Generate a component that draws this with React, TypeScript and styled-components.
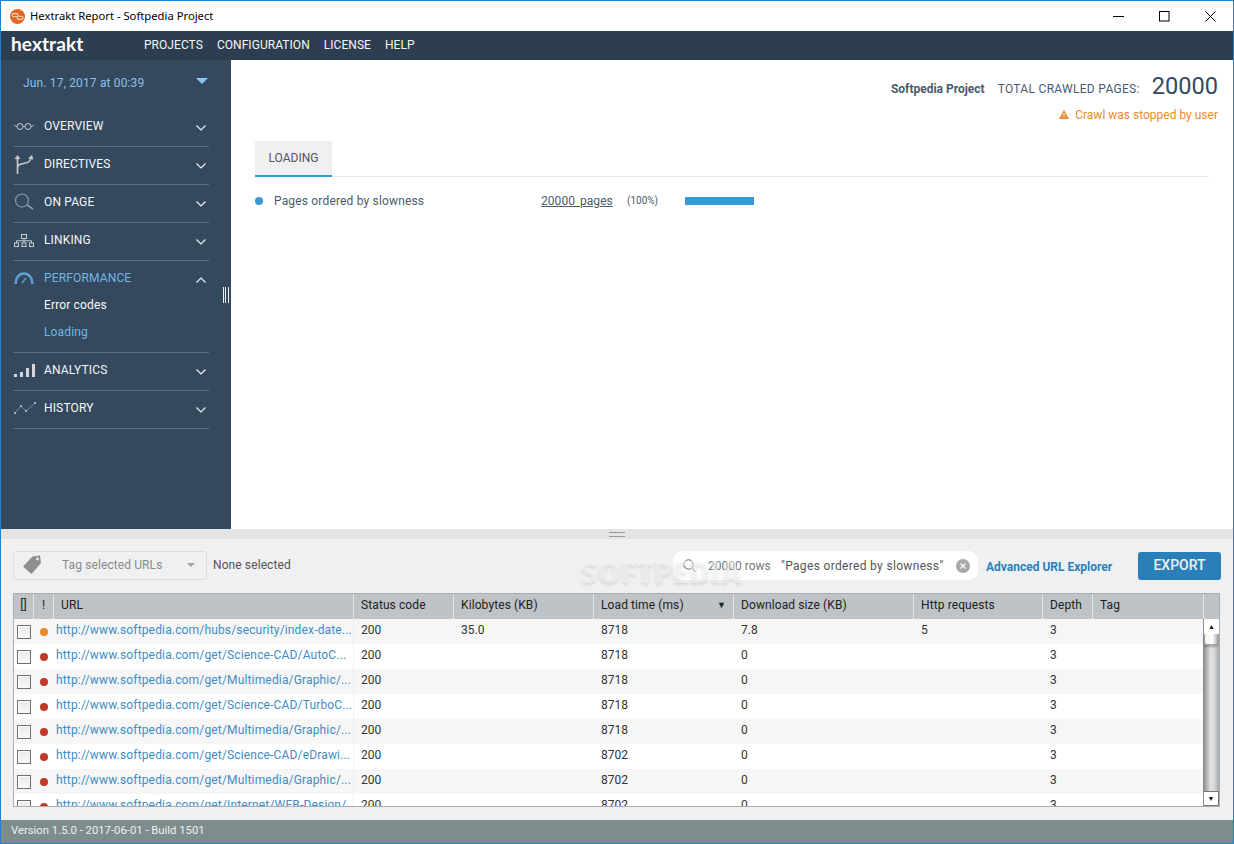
import React from "react";
import styled, { createGlobalStyle } from "styled-components";

const GlobalStyle = createGlobalStyle`
  html, body {
    margin: 0;
    padding: 0;
    background: #fff;
    overflow: hidden;
  }
  * { box-sizing: border-box; }
`;

const Window = styled.div`
  width: 1234px;
  height: 844px;
  display: flex;
  flex-direction: column;
  border: 1px solid #1b82d6;
  font-family: Roboto, "Liberation Sans", sans-serif;
  font-size: 12px;
  color: #34495e;
  overflow: hidden;
`;

const TitleBar = styled.div`
  height: 30px;
  flex: none;
  display: flex;
  align-items: center;
  padding-left: 9px;
  background: #fff;
`;

const TitleText = styled.span`
  margin-left: 5px;
  margin-bottom: 1px;
  font-family: "Noto Sans", "Open Sans", sans-serif;
  font-size: 11.25px;
  color: #000;
`;

const WindowButtons = styled.div`
  margin-left: auto;
  display: flex;
`;

const WindowButton = styled.div`
  width: 46px;
  height: 30px;
  display: flex;
  align-items: center;
  justify-content: center;
`;

const NavBar = styled.nav`
  height: 29px;
  flex: none;
  display: flex;
  align-items: center;
  background: #2c3e50;
  padding: 0 0 2px 10px;
`;

const Logo = styled.div`
  width: 133px;
  font-family: Lato, sans-serif;
  font-weight: 700;
  font-size: 19px;
  letter-spacing: 0.1px;
  color: #fff;
  margin-top: -2px;
`;

const NavLinks = styled.div`
  display: flex;
  gap: 14px;
`;

const NavLink = styled.a`
  font-size: 12px;
  color: #f4f6f7;
  letter-spacing: 0.05px;
`;

const TopArea = styled.div`
  height: 469px;
  flex: none;
  display: flex;
`;

const Sidebar = styled.aside`
  position: relative;
  width: 230px;
  flex: none;
  background: #34495e;
  padding: 0 22px 0 12px;
`;

const DateRow = styled.div`
  height: 49px;
  display: flex;
  align-items: flex-start;
  justify-content: space-between;
  padding: 16px 1px 0 10px;
  font-size: 12px;
  letter-spacing: 0.15px;
  color: #85c1ea;
`;

const DateCaret = styled.div`
  width: 0;
  height: 0;
  margin-top: 2px;
  border-left: 6px solid transparent;
  border-right: 6px solid transparent;
  border-top: 6px solid #85c8f2;
`;

const MenuSection = styled.div`
  border-bottom: 1px solid #5d6d7e;
`;

const MenuHead = styled.div`
  height: 37px;
  display: flex;
  align-items: center;
  padding-bottom: 3px;
`;

const MenuIcon = styled.div`
  width: 31px;
  flex: none;
  padding-left: 1px;
  display: flex;
  align-items: center;
`;

const MenuLabel = styled.span<{ $active?: boolean }>`
  flex: 1;
  font-size: 12px;
  letter-spacing: 0.15px;
  color: ${({ $active }) => ($active ? "#73b5e0" : "#f4f6f7")};
`;

const Chevron = styled.svg`
  flex: none;
  margin-right: 3px;
  margin-top: 3px;
`;

const SubItems = styled.div`
  display: flex;
  flex-direction: column;
  padding: 0 0 7px 31px;
`;

const SubItem = styled.div<{ $active?: boolean }>`
  height: 27px;
  display: flex;
  align-items: center;
  font-size: 12px;
  letter-spacing: 0.15px;
  color: ${({ $active }) => ($active ? "#73b5e0" : "#f4f6f7")};
  &:first-child { margin-top: -7px; }
`;

const Grip = styled.div`
  position: absolute;
  left: 222px;
  top: 227px;
  width: 6px;
  height: 16px;
  border-left: 1px solid #ecf0f1;
  border-right: 1px solid #ecf0f1;
  &::after {
    content: "";
    display: block;
    width: 1px;
    height: 16px;
    margin-left: 1px;
    background: #ecf0f1;
  }
`;

const Main = styled.main`
  flex: 1;
  background: #fff;
  padding: 0 24px;
`;

const Summary = styled.div`
  height: 42px;
  margin-right: -9px;
  display: flex;
  align-items: center;
  justify-content: flex-end;
  padding-top: 10px;
`;

const ProjectName = styled.span`
  font-weight: 700;
  color: #4a5b6d;
  margin-right: 13px;
  position: relative;
  top: 3px;
`;

const TotalLabel = styled.span`
  color: #4a5b6d;
  font-size: 12px;
  letter-spacing: 0.3px;
  margin-right: 12px;
  position: relative;
  top: 3px;
`;

const TotalValue = styled.span`
  font-size: 23.6px;
  color: #34495e;
  line-height: 28px;
`;

const Warning = styled.div`
  height: 24px;
  margin-right: -9px;
  padding-top: 1px;
  display: flex;
  align-items: center;
  justify-content: flex-end;
  gap: 6px;
  color: #ee8a2c;
  font-size: 12px;
`;

const TabStrip = styled.div`
  margin-top: 15px;
  display: flex;
  border-bottom: 1px solid #e8e8e8;
`;

const Tab = styled.div`
  width: 77px;
  height: 36px;
  margin-bottom: -1px;
  background: #eff0f2;
  border-bottom: 2px solid #3498db;
  display: flex;
  align-items: center;
  justify-content: center;
  font-size: 12px;
  color: #555;
`;

const ResultRow = styled.div`
  height: 48px;
  display: flex;
  align-items: center;
`;

const BlueDot = styled.span`
  width: 8px;
  height: 8px;
  border-radius: 50%;
  background: #3498db;
  margin-right: 11px;
`;

const ResultName = styled.span`
  width: 267px;
  color: #4a5b6d;
  letter-spacing: 0.17px;
`;

const PagesLink = styled.a`
  width: 86px;
  color: #4a5b6d;
  text-decoration: underline;
  word-spacing: 2px;
  letter-spacing: 0.05px;
`;

const Percent = styled.span`
  width: 58px;
  font-size: 10px;
  color: #4a5b6d;
  margin-bottom: 2px;
`;

const Bar = styled.div`
  width: 69px;
  height: 8px;
  background: #3498db;
`;

const Splitter = styled.div`
  height: 10px;
  flex: none;
  background: #e4e4e4;
  display: flex;
  align-items: center;
  justify-content: center;
`;

const SplitterGrip = styled.div`
  width: 16px;
  height: 5px;
  border-top: 1px solid #999;
  border-bottom: 1px solid #999;
`;

const BottomPanel = styled.section`
  flex: 1;
  position: relative;
  background: #eff0f2;
  padding: 12px 12px 0;
`;

const Toolbar = styled.div`
  height: 29px;
  display: flex;
  align-items: center;
`;

const TagSelect = styled.div`
  width: 194px;
  height: 29px;
  display: flex;
  align-items: center;
  border: 1px solid #dcdde0;
  border-radius: 3px;
  padding: 0 11px 2px 8px;
  color: #8a8a8a;
`;

const TagText = styled.span`
  flex: 1;
  margin-left: 20px;
  letter-spacing: 0.1px;
`;

const TagCaret = styled.span`
  width: 0;
  height: 0;
  border-left: 4px solid transparent;
  border-right: 4px solid transparent;
  border-top: 4px solid #a2a2a2;
`;

const NoneSelected = styled.span`
  margin-left: 6px;
  margin-bottom: 2px;
  color: #555;
  letter-spacing: 0.1px;
`;

const SearchPill = styled.div`
  margin-left: auto;
  width: 305px;
  height: 29px;
  background: #fff;
  border-radius: 9px;
  display: flex;
  align-items: center;
  padding: 0 8px 0 10px;
  color: #666;
`;

const RowCount = styled.span`
  margin-left: 12px;
  width: 73px;
  color: #777;
`;

const SearchTerm = styled.span`
  flex: 1;
  color: #555;
  letter-spacing: 0.33px;
`;

const AdvancedLink = styled.a`
  margin-left: 8px;
  margin-top: 2px;
  width: 152px;
  font-weight: 700;
  color: #2980b9;
`;

const ExportButton = styled.button`
  width: 83px;
  height: 28px;
  border: none;
  border-radius: 3px;
  background: #2980b9;
  color: #ecf0f1;
  font-family: inherit;
  font-size: 14px;
  font-weight: 500;
  padding: 0 0 2px;
`;

const Watermark = styled.div`
  position: absolute;
  left: 579px;
  top: 15px;
  font-family: "Open Sans", sans-serif;
  font-weight: 800;
  font-size: 30px;
  letter-spacing: -0.4px;
  line-height: 36px;
  color: rgba(255, 255, 255, 0.45);
  text-shadow: 0 2px 3px rgba(0, 0, 0, 0.1);
  pointer-events: none;
`;

const Table = styled.div`
  width: 1207px;
  margin-top: 13px;
  border: 1px solid #a8aeb2;
  background: #fff;
`;

const HeaderRow = styled.div`
  display: grid;
  grid-template-columns: 20px 20px 300px 100px 140px 140px 180px 129px 50px 111px 1fr;
  height: 25px;
  background: #bdc3c7;
`;

const HeaderCell = styled.div<{ $center?: boolean }>`
  display: flex;
  align-items: center;
  justify-content: ${({ $center }) => ($center ? "center" : "flex-start")};
  padding: 0 ${({ $center }) => ($center ? "0" : "7px")} 3px;
  border-right: 1px solid #e3e6e8;
  font-size: 12px;
  letter-spacing: 0.1px;
  color: #222;
  &:last-child { border-right: none; }
`;

const SortMark = styled.span`
  margin-left: auto;
  font-size: 9px;
`;

const BodyWrap = styled.div`
  display: flex;
  height: 187px;
  overflow: hidden;
`;

const Rows = styled.div`
  flex: 1;
  min-width: 0;
`;

const Row = styled.div<{ $odd: boolean }>`
  display: grid;
  grid-template-columns: 20px 20px 300px 100px 140px 140px 180px 129px 50px 111px;
  height: 25px;
  background: ${({ $odd }) => ($odd ? "#f6f6f6" : "#fff")};
`;

const Cell = styled.div`
  display: flex;
  align-items: center;
  padding-left: 7px;
  padding-bottom: 4px;
  font-size: 12px;
  color: #333;
  white-space: nowrap;
  overflow: hidden;
`;

const CheckCell = styled.div`
  display: flex;
  align-items: center;
  padding-left: 3px;
`;

const CheckBox = styled.div`
  width: 14px;
  height: 14px;
  border: 1px solid #6f6f6f;
  background: linear-gradient(#e9e9e9, #fafafa);
  box-shadow: inset 1px 1px 0 #fff;
`;

const StatusCell = styled.div`
  display: flex;
  align-items: center;
  padding-left: 6px;
`;

const StatusDot = styled.span<{ $color: string }>`
  width: 8px;
  height: 8px;
  border-radius: 50%;
  background: ${({ $color }) => $color};
`;

const UrlCell = styled(Cell)`
  padding-left: 2px;
  color: #3f8cc4;
  letter-spacing: 0.16px;
  border-right: 1px solid #eef0f1;
`;

const Scrollbar = styled.div`
  width: 16px;
  flex: none;
  display: flex;
  flex-direction: column;
  border-left: 1px solid #8c8c8c;
  background: linear-gradient(90deg, #8f9193, #e2e3e4 45%, #d5d6d7 70%, #a6a8a9);
`;

const ScrollButton = styled.div`
  height: 15px;
  flex: none;
  background: #fff;
  display: flex;
  align-items: center;
  justify-content: center;
  font-size: 7px;
  color: #111;
`;

const ScrollThumb = styled.div`
  height: 11px;
  margin-right: 1px;
  background: linear-gradient(90deg, #f2f2f2, #fff 60%, #bcbcbc);
  border: 1px solid #a4a4a4;
  border-top: none;
  border-radius: 0 0 3px 3px;
  box-shadow: 0 2px 2px rgba(0, 0, 0, 0.25);
`;

const ScrollTrack = styled.div`
  flex: 1;
`;

const ScrollDown = styled(ScrollButton)`
  border: 1px solid #777;
  border-left: none;
`;

const Footer = styled.footer`
  height: 23px;
  flex: none;
  display: flex;
  align-items: center;
  background: #7f8c8d;
  padding: 0 0 2px 10px;
  color: #ecf0f1;
  font-size: 11.3px;
`;

const AppIcon = () => (
  <svg width="15" height="15" viewBox="0 0 15 15">
    <circle cx="7.5" cy="7.5" r="7.5" fill="#e2661d" />
    <rect x="2" y="4.6" width="6" height="3.2" rx="1.6" fill="none" stroke="#f6d7c2" strokeWidth="1.1" />
    <rect x="7" y="7.2" width="6" height="3.2" rx="1.6" fill="none" stroke="#f6d7c2" strokeWidth="1.1" />
  </svg>
);

const GlassesIcon = () => (
  <svg width="20" height="10" viewBox="0 0 20 10" fill="none" stroke="#c5cbd1" strokeWidth="1">
    <circle cx="6" cy="5.5" r="3" />
    <circle cx="14" cy="5.5" r="3" />
    <path d="M9 5.5h2M0.5 4.5l2.5 1M19.5 4.5l-2.5 1" />
  </svg>
);

const DirectivesIcon = () => (
  <svg width="21" height="20" viewBox="0 0 21 20" fill="none" stroke="#c5cbd1" strokeWidth="1.6">
    <path d="M3.5 20V3M3.5 15c0-4 1-4.5 6-5.5 5-1 7-2 7.5-6" />
    <path d="M0.5 5l3-4 3 4zM14 4.5l4-3.5 1.5 4.5z" fill="#c5cbd1" stroke="none" />
  </svg>
);

const SearchIcon = () => (
  <svg width="20" height="18" viewBox="0 0 20 18" fill="none" stroke="#8b98a5" strokeWidth="1.2">
    <circle cx="8" cy="7.5" r="6.5" />
    <path d="M13 12l6 4" strokeWidth="1.6" />
  </svg>
);

const SitemapIcon = () => (
  <svg width="20" height="13" viewBox="0 0 20 13" fill="none" stroke="#c5cbd1" strokeWidth="1">
    <rect x="7.5" y="0.5" width="5" height="4" />
    <rect x="0.5" y="9" width="4" height="3.5" />
    <rect x="8" y="9" width="4" height="3.5" />
    <rect x="15.5" y="9" width="4" height="3.5" />
    <path d="M10 4.5V9M2.5 9V6.8h15V9" />
  </svg>
);

const GaugeIcon = () => (
  <svg width="20" height="12" viewBox="0 0 20 12" fill="none" stroke="#5f9fcb" strokeWidth="2.6">
    <path d="M1.5 12C1.5 6 5 1.5 10 1.5S18.5 6 18.5 12" />
    <path d="M8 11l4-5" strokeWidth="1.4" />
  </svg>
);

const BarsIcon = () => (
  <svg width="21" height="13" viewBox="0 0 21 13" fill="#d5d9dd">
    <rect x="0" y="10" width="3" height="3" />
    <rect x="6" y="8" width="3" height="5" />
    <rect x="12" y="4" width="3" height="9" />
    <rect x="18" y="0" width="3" height="13" />
  </svg>
);

const LineIcon = () => (
  <svg width="22" height="12" viewBox="0 0 22 12" fill="#c5cbd1" stroke="#8f9aa6" strokeWidth="0.8">
    <path d="M1 11L7 4l5 5 9-8" fill="none" />
    <circle cx="1" cy="11" r="1" stroke="none" />
    <circle cx="7" cy="4" r="1" stroke="none" />
    <circle cx="12" cy="9" r="1" stroke="none" />
    <circle cx="21" cy="1" r="1" stroke="none" />
  </svg>
);

const ChevronIcon = ({ up }: { up?: boolean }) => (
  <Chevron width="10" height="6" viewBox="0 0 10 6" fill="none" stroke="#ecf0f1" strokeWidth="1.2">
    <path d={up ? "M0.5 5.5L5 1l4.5 4.5" : "M0.5 0.5L5 5l4.5-4.5"} />
  </Chevron>
);

const WarningIcon = () => (
  <svg width="10" height="9" viewBox="0 0 10 9">
    <path d="M5 0l5 9H0z" fill="#ee8a2c" />
    <rect x="4.5" y="3" width="1" height="3" fill="#fff" />
    <rect x="4.5" y="6.7" width="1" height="1" fill="#fff" />
  </svg>
);

const TagIcon = () => (
  <svg width="20" height="20" viewBox="0 0 20 20">
    <path d="M10.5 1.5L18 0.5l1 7.5-9.5 11L1 11.5z" fill="#8f8f8f" />
    <circle cx="15.5" cy="4" r="1.4" fill="#eff0f2" />
  </svg>
);

const MagnifierIcon = () => (
  <svg width="13" height="14" viewBox="0 0 13 14" fill="none" stroke="#666" strokeWidth="1">
    <circle cx="5.5" cy="5.5" r="4.7" />
    <path d="M9 9l3.5 4" />
  </svg>
);

const ClearIcon = () => (
  <svg width="14" height="14" viewBox="0 0 14 14">
    <circle cx="7" cy="7" r="7" fill="#a8a8a8" />
    <path d="M4.5 4.5l5 5M9.5 4.5l-5 5" stroke="#fff" strokeWidth="1.1" />
  </svg>
);

const menuBefore = [
  { label: "OVERVIEW", icon: <GlassesIcon /> },
  { label: "DIRECTIVES", icon: <DirectivesIcon /> },
  { label: "ON PAGE", icon: <SearchIcon /> },
  { label: "LINKING", icon: <SitemapIcon /> },
];

const menuAfter = [
  { label: "ANALYTICS", icon: <BarsIcon /> },
  { label: "HISTORY", icon: <LineIcon /> },
];

const headers = [
  "URL",
  "Status code",
  "Kilobytes (KB)",
  "Load time (ms)",
  "Download size (KB)",
  "Http requests",
  "Depth",
  "Tag",
];

const rows = [
  { url: "http://www.softpedia.com/hubs/security/index-date...", kb: "35.0", time: "8718", size: "7.8", req: "5", dot: "#ee8a2c" },
  { url: "http://www.softpedia.com/get/Science-CAD/AutoC...", kb: "", time: "8718", size: "0", req: "", dot: "#c0392b" },
  { url: "http://www.softpedia.com/get/Multimedia/Graphic/...", kb: "", time: "8718", size: "0", req: "", dot: "#c0392b" },
  { url: "http://www.softpedia.com/get/Science-CAD/TurboC...", kb: "", time: "8718", size: "0", req: "", dot: "#c0392b" },
  { url: "http://www.softpedia.com/get/Multimedia/Graphic/...", kb: "", time: "8718", size: "0", req: "", dot: "#c0392b" },
  { url: "http://www.softpedia.com/get/Science-CAD/eDrawi...", kb: "", time: "8702", size: "0", req: "", dot: "#c0392b" },
  { url: "http://www.softpedia.com/get/Multimedia/Graphic/...", kb: "", time: "8702", size: "0", req: "", dot: "#c0392b" },
  { url: "http://www.softpedia.com/get/Internet/WEB-Design/...", kb: "", time: "8702", size: "0", req: "", dot: "#c0392b" },
];

export default function App() {
  return (
    <Window>
      <GlobalStyle />
      <TitleBar>
        <AppIcon />
        <TitleText>Hextrakt Report - Softpedia Project</TitleText>
        <WindowButtons>
          <WindowButton>
            <svg width="11" height="1"><rect width="11" height="1" fill="#000" /></svg>
          </WindowButton>
          <WindowButton>
            <svg width="11" height="11"><rect x="0.5" y="0.5" width="9.5" height="9.5" fill="none" stroke="#000" /></svg>
          </WindowButton>
          <WindowButton>
            <svg width="11" height="11"><path d="M0.5 0.5l10 10M10.5 0.5l-10 10" stroke="#000" /></svg>
          </WindowButton>
        </WindowButtons>
      </TitleBar>

      <NavBar>
        <Logo>hextrakt</Logo>
        <NavLinks>
          <NavLink>PROJECTS</NavLink>
          <NavLink>CONFIGURATION</NavLink>
          <NavLink>LICENSE</NavLink>
          <NavLink>HELP</NavLink>
        </NavLinks>
      </NavBar>

      <TopArea>
        <Sidebar>
          <DateRow>
            <span>Jun. 17, 2017 at 00:39</span>
            <DateCaret />
          </DateRow>
          {menuBefore.map((m) => (
            <MenuSection key={m.label}>
              <MenuHead>
                <MenuIcon>{m.icon}</MenuIcon>
                <MenuLabel>{m.label}</MenuLabel>
                <ChevronIcon />
              </MenuHead>
            </MenuSection>
          ))}
          <MenuSection>
            <MenuHead>
              <MenuIcon><GaugeIcon /></MenuIcon>
              <MenuLabel $active>PERFORMANCE</MenuLabel>
              <ChevronIcon up />
            </MenuHead>
            <SubItems>
              <SubItem>Error codes</SubItem>
              <SubItem $active>Loading</SubItem>
            </SubItems>
          </MenuSection>
          {menuAfter.map((m) => (
            <MenuSection key={m.label}>
              <MenuHead>
                <MenuIcon>{m.icon}</MenuIcon>
                <MenuLabel>{m.label}</MenuLabel>
                <ChevronIcon />
              </MenuHead>
            </MenuSection>
          ))}
          <Grip />
        </Sidebar>

        <Main>
          <Summary>
            <ProjectName>Softpedia Project</ProjectName>
            <TotalLabel>TOTAL CRAWLED PAGES:</TotalLabel>
            <TotalValue>20000</TotalValue>
          </Summary>
          <Warning>
            <WarningIcon />
            <span>Crawl was stopped by user</span>
          </Warning>
          <TabStrip>
            <Tab>LOADING</Tab>
          </TabStrip>
          <ResultRow>
            <BlueDot />
            <ResultName>Pages ordered by slowness</ResultName>
            <PagesLink>20000 pages</PagesLink>
            <Percent>(100%)</Percent>
            <Bar />
          </ResultRow>
        </Main>
      </TopArea>

      <Splitter>
        <SplitterGrip />
      </Splitter>

      <BottomPanel>
        <Toolbar>
          <TagSelect>
            <TagIcon />
            <TagText>Tag selected URLs</TagText>
            <TagCaret />
          </TagSelect>
          <NoneSelected>None selected</NoneSelected>
          <SearchPill>
            <MagnifierIcon />
            <RowCount>20000 rows</RowCount>
            <SearchTerm>"Pages ordered by slowness"</SearchTerm>
            <ClearIcon />
          </SearchPill>
          <AdvancedLink>Advanced URL Explorer</AdvancedLink>
          <ExportButton>EXPORT</ExportButton>
        </Toolbar>
        <Watermark>SOFTPEDIA</Watermark>

        <Table>
          <HeaderRow>
            <HeaderCell $center>[]</HeaderCell>
            <HeaderCell $center>!</HeaderCell>
            {headers.map((h) => (
              <HeaderCell key={h}>
                {h}
                {h === "Load time (ms)" && <SortMark>▼</SortMark>}
              </HeaderCell>
            ))}
            <HeaderCell />
          </HeaderRow>
          <BodyWrap>
            <Rows>
              {rows.map((r, i) => (
                <Row key={i} $odd={i % 2 === 0}>
                  <CheckCell><CheckBox /></CheckCell>
                  <StatusCell><StatusDot $color={r.dot} /></StatusCell>
                  <UrlCell>{r.url}</UrlCell>
                  <Cell>200</Cell>
                  <Cell>{r.kb}</Cell>
                  <Cell>{r.time}</Cell>
                  <Cell>{r.size}</Cell>
                  <Cell>{r.req}</Cell>
                  <Cell>3</Cell>
                  <Cell />
                </Row>
              ))}
            </Rows>
            <Scrollbar>
              <ScrollButton>▲</ScrollButton>
              <ScrollThumb />
              <ScrollTrack />
              <ScrollDown>▼</ScrollDown>
            </Scrollbar>
          </BodyWrap>
        </Table>
      </BottomPanel>

      <Footer>Version 1.5.0 - 2017-06-01 - Build 1501</Footer>
    </Window>
  );
}
